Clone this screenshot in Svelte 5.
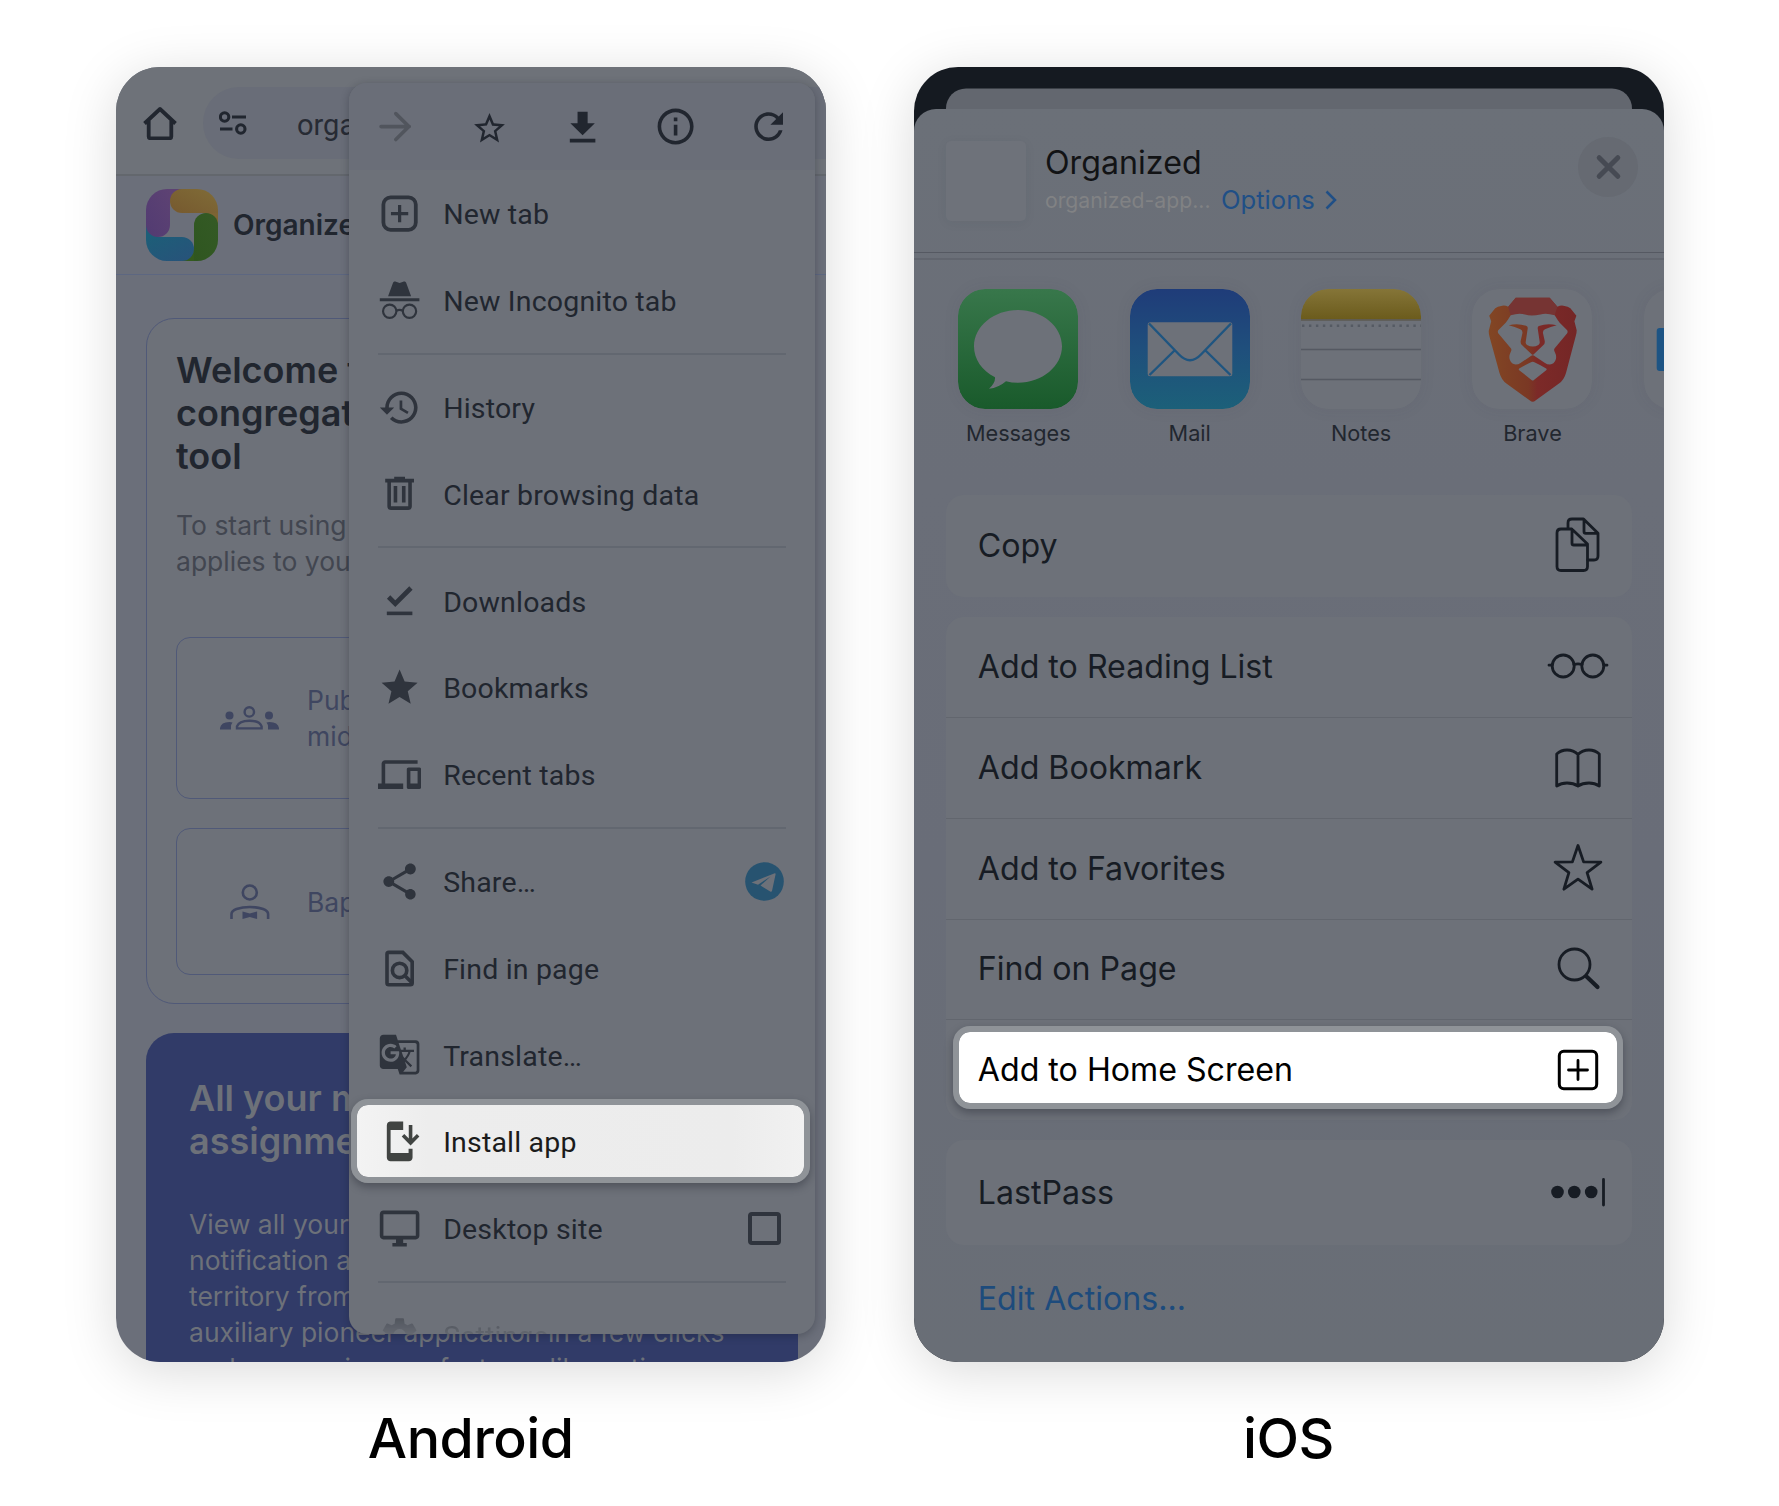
<script>
  const groups = [
    [
      { icon: 'newtab', label: 'New tab' },
      { icon: 'incognito', label: 'New Incognito tab' }
    ],
    [
      { icon: 'history', label: 'History' },
      { icon: 'trash', label: 'Clear browsing data' }
    ],
    [
      { icon: 'done', label: 'Downloads' },
      { icon: 'star', label: 'Bookmarks' },
      { icon: 'devices', label: 'Recent tabs' }
    ],
    [
      { icon: 'share', label: 'Share…', end: 'telegram' },
      { icon: 'find', label: 'Find in page' },
      { icon: 'translate', label: 'Translate…' },
      { icon: 'install', label: 'Install app', active: true },
      { icon: 'desktop', label: 'Desktop site', end: 'checkbox' }
    ],
    [{ icon: 'gear', label: 'Settings', faded: true }]
  ];

  const actions = [
    { icon: 'glasses', label: 'Add to Reading List' },
    { icon: 'book', label: 'Add Bookmark' },
    { icon: 'favorite', label: 'Add to Favorites' },
    { icon: 'search', label: 'Find on Page' },
    { icon: 'plus', label: 'Add to Home Screen', active: true }
  ];
</script>

{#snippet menuIcon(name)}
  <svg class="mi" viewBox="0 0 24 24">
    {#if name === 'newtab'}
      <rect x="3" y="3" width="18" height="18" rx="4" fill="none" stroke="currentColor" stroke-width="2.1" />
      <path d="M12 7.2v9.6M7.2 12h9.6" fill="none" stroke="currentColor" stroke-width="1.8" />
    {:else if name === 'incognito'}
      <path d="M5.6 10.2 8.2 3c.3-.9 1-1.2 1.8-.9l2 .7 2-.7c.8-.3 1.5 0 1.8.9l2.6 7.2zM1 11.3h22v1.6H1z" />
      <g fill="none" stroke="currentColor" stroke-width="1.2">
        <circle cx="6.5" cy="18.5" r="3.7" /><circle cx="17.5" cy="18.5" r="3.7" /><path d="M10.2 18.2q1.8-.9 3.6 0" />
      </g>
    {:else if name === 'history'}
      <path d="M13 3c-4.97 0-9 4.03-9 9H1l3.89 3.89.07.14L9 12H6c0-3.87 3.13-7 7-7s7 3.13 7 7-3.13 7-7 7c-1.93 0-3.68-.79-4.94-2.06l-1.42 1.42C8.27 19.99 10.51 21 13 21c4.97 0 9-4.03 9-9s-4.03-9-9-9zm-1 5v5l4.28 2.54.72-1.21-3.5-2.08V8H12z" />
    {:else if name === 'trash'}
      <path d="M9 2.6h6v1.2h5v2H4v-2h5zM8.7 7.8h2V17h-2zM13.3 7.8h2V17h-2z" />
      <path d="M6.2 5v14.1q0 1 1 1h9.6q1 0 1-1V5" fill="none" stroke="currentColor" stroke-width="2" />
    {:else if name === 'done'}
      <path d="M5.9 10 9.6 13.7 18.3 5" fill="none" stroke="currentColor" stroke-width="2.6" />
      <path d="M4.9 18.1h14.2v2H4.9z" />
    {:else if name === 'star'}
      <path d="M12 17.27 18.18 21l-1.64-7.03L22 9.24l-7.19-.61L12 2 9.19 8.63 2 9.24l5.46 4.73L5.82 21z" />
    {:else if name === 'devices'}
      <path d="M4 6h18V4H4c-1.1 0-2 .9-2 2v11H0v3h14v-3H4V6zm19 2h-6c-.55 0-1 .45-1 1v10c0 .55.45 1 1 1h6c.55 0 1-.45 1-1V9c0-.55-.45-1-1-1zm-1 9h-4v-7h4v7z" />
    {:else if name === 'share'}
      <path d="M18 16.08c-.76 0-1.44.3-1.96.77L8.91 12.7c.05-.23.09-.46.09-.7s-.04-.47-.09-.7l7.05-4.11c.54.5 1.25.81 2.04.81 1.66 0 3-1.34 3-3s-1.34-3-3-3-3 1.34-3 3c0 .24.04.47.09.7L8.04 9.81C7.5 9.31 6.79 9 6 9c-1.66 0-3 1.34-3 3s1.34 3 3 3c.79 0 1.5-.31 2.04-.81l7.12 4.16c-.05.21-.08.43-.08.65 0 1.61 1.31 2.92 2.92 2.92 1.61 0 2.92-1.31 2.92-2.92s-1.31-2.92-2.92-2.92z" />
    {:else if name === 'find'}
      <g fill="none" stroke="currentColor" stroke-width="2">
        <path d="M6 3h7.8L19 8.2V20q0 1-1 1H6q-1 0-1-1V4q0-1 1-1z" />
        <circle cx="12" cy="13" r="4" /><path d="m14.6 15.6 4.4 4.4" />
      </g>
    {:else if name === 'translate'}
      <path d="M21 4H11l-1-3H3c-1.1 0-2 .9-2 2v15c0 1.1.9 2 2 2h8l1 3h9c1.1 0 2-.9 2-2V6c0-1.1-.9-2-2-2zM7 16c-2.76 0-5-2.24-5-5s2.24-5 5-5c1.35 0 2.48.5 3.35 1.3L9.03 8.57c-.38-.36-1.04-.78-2.03-.78-1.74 0-3.15 1.44-3.15 3.21S5.26 14.21 7 14.21c2.01 0 2.84-1.44 2.92-2.41H7v-1.71h4.68c.07.31.12.61.12 1.02C11.8 13.97 9.89 16 7 16zm6.17-5.42h3.7c-.43 1.25-1.11 2.43-2.05 3.47-.31-.35-.6-.72-.86-1.1l-.79-2.37zm8.33 9.92c0 .55-.45 1-1 1H14l2-2.5-1.04-3.1 3.1 3.1.92-.92-3.3-3.25.02-.02c1.13-1.25 1.93-2.69 2.4-4.22H20v-1.3h-4.53V8h-1.29v1.29h-1.44L11.46 5.5h9.04c.55 0 1 .45 1 1v14z" />
    {:else if name === 'install'}
      <path d="M14 .9H7C5.8.9 4.9 1.8 4.9 3v17.8c0 1.2.9 2.1 2.1 2.1h10.1c1.2 0 2.1-.9 2.1-2.1V16H17v2.4H7V5.6h7z" />
      <path d="M18.1 2.8v9.8M13.9 8.5l4.2 4.2 4.2-4.2" fill="none" stroke="currentColor" stroke-width="2" />
    {:else if name === 'desktop'}
      <path d="M21 2H3c-1.1 0-2 .9-2 2v12c0 1.1.9 2 2 2h7v2H8v2h8v-2h-2v-2h7c1.1 0 2-.9 2-2V4c0-1.1-.9-2-2-2zm0 14H3V4h18v12z" />
    {:else if name === 'gear'}
      <path d="M19.14 12.94c.04-.3.06-.61.06-.94 0-.32-.02-.64-.07-.94l2.03-1.58a.49.49 0 0 0 .12-.61l-1.92-3.32a.49.49 0 0 0-.59-.22l-2.39.96c-.5-.38-1.03-.7-1.62-.94l-.36-2.54a.48.48 0 0 0-.48-.41h-3.84c-.24 0-.43.17-.47.41l-.36 2.54c-.59.24-1.13.57-1.62.94l-2.39-.96a.48.48 0 0 0-.59.22L2.74 8.87c-.12.21-.08.47.12.61l2.03 1.58c-.05.3-.09.63-.09.94s.02.64.07.94l-2.03 1.58a.49.49 0 0 0-.12.61l1.92 3.32c.12.22.37.29.59.22l2.39-.96c.5.38 1.03.7 1.62.94l.36 2.54c.05.24.24.41.48.41h3.84c.24 0 .44-.17.47-.41l.36-2.54c.59-.24 1.13-.56 1.62-.94l2.39.96c.22.08.47 0 .59-.22l1.92-3.32a.48.48 0 0 0-.12-.61l-2.01-1.58zM12 15.6A3.61 3.61 0 0 1 8.4 12c0-1.98 1.62-3.6 3.6-3.6s3.6 1.62 3.6 3.6-1.62 3.6-3.6 3.6z" />
    {/if}
  </svg>
{/snippet}

{#snippet actionIcon(name)}
  <svg class="ai" viewBox="0 0 64 64">
    {#if name === 'copy'}
      <path d="M22 15.5V10q0-4 4-4h11.500l14.500 14.300V43q0 4-4 4h-6.300M38 6.500V18.500q0 1.800 1.800 1.800H52" />
      <path d="M15 16h10.800L41.500 31V53.500q0 4-4 4H15q-4 0-4-4V20q0-4 4-4zM26 16.500V30.200q0 1.800 1.800 1.800H41.500" />
    {:else if name === 'glasses'}
      <circle cx="17.200" cy="32" r="11" /><circle cx="46.800" cy="32" r="11" />
      <path d="M28 30.500q4-1.200 8 0M3 31.200h3.200M57.800 31.200H61" />
    {:else if name === 'book'}
      <path d="M32 50V18.500Q27.500 14 21 14q-6 0-10.300 4v32q4.500-3 10.300-3 6.500 0 11 3 4.500-3 11-3 5.800 0 10.300 3V18Q49 14 43 14q-6.500 0-11 4.500" />
    {:else if name === 'favorite'}
      <path d="M32 9.500 37.600 25.900 54.900 26.200 41.100 36.600 46.100 53.200 32 43.200 17.900 53.200 22.900 36.600 9.100 26.200 26.400 25.900z" />
    {:else if name === 'search'}
      <circle cx="28.500" cy="27.500" r="15.500" /><path class="thick" d="M40.500 39.500 51.500 50" />
    {:else if name === 'plus'}
      <rect x="13.300" y="13.300" width="37.400" height="37.400" rx="4.500" class="box" /><path d="M32 22.500v19M22.500 32h19" />
    {:else if name === 'lastpass'}
      <g class="solid"><circle cx="11.500" cy="32" r="6.300" /><circle cx="28.300" cy="32" r="6.300" /><circle cx="45.200" cy="32" r="6.300" /></g>
      <path d="M57.500 19.500v25.500" />
    {/if}
  </svg>
{/snippet}

<main class="board">
  <figure class="shot android-shot">
    <div class="phone android">
      <div class="toolbar">
        <svg class="home" viewBox="0 0 34 34">
          <path d="M1.500 17.500 17 3l15.500 14.500M5.700 14V30.500q0 1.800 1.800 1.800h19q1.800 0 1.800-1.800V14" />
        </svg>
        <div class="url">
          <svg class="tune" viewBox="0 0 28 24">
            <circle cx="5.600" cy="6" r="4.200" /><path d="M13 6h14M1 18h12.500" /><circle cx="21.800" cy="18" r="4.200" />
          </svg>
          <span>organized-app.com</span>
        </div>
      </div>

      <div class="apphead">
        <svg class="logo" viewBox="0 0 72 72">
          <defs>
            <clipPath id="logoClip"><rect width="72" height="72" rx="21" /></clipPath>
            <linearGradient id="lgP" x1="1" y1="0" x2="0" y2="1"><stop offset="0" stop-color="#5d4273" /><stop offset="1" stop-color="#523b72" /></linearGradient>
            <linearGradient id="lgY" x1="0" y1="1" x2="1" y2="0"><stop offset="0" stop-color="#76592f" /><stop offset="1" stop-color="#806c37" /></linearGradient>
            <linearGradient id="lgG" x1="0" y1="1" x2="1" y2="0"><stop offset="0" stop-color="#2f5620" /><stop offset="1" stop-color="#345a25" /></linearGradient>
            <linearGradient id="lgB" x1="0" y1="0" x2="1" y2="1"><stop offset="0" stop-color="#1d5e78" /><stop offset="1" stop-color="#28527a" /></linearGradient>
          </defs>
          <g clip-path="url(#logoClip)">
            <path d="M23 0h13v12H23z" fill="#5d4273" /><path d="M60 23h12v13H60z" fill="#7d6433" />
            <path d="M36 60h13v12H36z" fill="#345a1e" /><path d="M0 36h12v13H0z" fill="#1d5e78" />
            <path d="M36 0h36v24H36a12 12 0 0 1 0-24z" fill="url(#lgY)" />
            <path d="M72 36v36H48V36a12 12 0 0 1 24 0z" fill="url(#lgG)" />
            <path d="M36 72H0V48h36a12 12 0 0 1 0 24z" fill="url(#lgB)" />
            <path d="M0 36V0h24v36a12 12 0 0 1-24 0z" fill="url(#lgP)" />
          </g>
        </svg>
        <strong>Organized</strong>
      </div>

      <div class="page">
        <section class="card">
          <h2>Welcome to the<br />congregation<br />tool</h2>
          <p>To start using the app,<br />applies to you</p>
          <div class="option tall">
            <svg class="people" viewBox="0 0 59 24">
              <g fill="currentColor"><circle cx="9.500" cy="9.500" r="4" /><circle cx="49" cy="9.500" r="4" />
                <path d="M0 23.500V22q1-6 9.500-6 2 0 3 .4-1.500 2-1.500 4v3.100zM59 23.500V22q-1-6-9.500-6-2 0-3 .4 1.500 2 1.500 4v3.100z" /></g>
              <g fill="none" stroke="currentColor" stroke-width="2.400"><circle cx="29.300" cy="5.900" r="4.700" />
                <path d="M17 22.400v-2q2-5.700 12.300-5.700t12.300 5.700v2z" /></g>
            </svg>
            <span>Publisher<br />midweek</span>
          </div>
          <div class="option">
            <svg class="person" viewBox="0 0 40 36">
              <circle cx="19.800" cy="8.500" r="7" /><path d="M1.500 35v-5q0-3 5-5 6-2 13.300-2t13.300 2q5 2 5 5v5" />
              <path class="tie" d="M12.500 27.500l7.300 2 7.300-2v7.500l-7.300-2-7.300 2z" />
            </svg>
            <span>Baptized</span>
          </div>
        </section>
        <section class="promo">
          <h2>All your ministry<br />assignments</h2>
          <p>View all your meetings,<br />notification and<br />territory from anywhere<br />auxiliary pioneer application in a few clicks<br />and more using our features like notices</p>
        </section>
      </div>

      <div class="menu">
        <div class="quick">
          <svg class="mi pale" viewBox="0 0 24 24"><path d="M2.800 12h15.700M11 4.800l7.300 7.200-7.300 7.200" fill="none" stroke="currentColor" stroke-width="2" stroke-linecap="round" stroke-linejoin="round" /></svg>
          <svg class="mi small" viewBox="0 0 24 24"><path d="M22 9.240l-7.190-.62L12 2 9.190 8.630 2 9.240l5.460 4.730L5.820 21 12 17.270 18.180 21l-1.630-7.030L22 9.240zM12 15.400l-3.760 2.270 1-4.280-3.320-2.880 4.380-.38L12 6.100l1.710 4.040 4.380.38-3.320 2.880 1 4.280L12 15.400z" /></svg>
          <svg class="mi" viewBox="0 0 24 24"><path d="M9.200 3.800h5.600v6.400h4L12 16.800l-6.800-6.600H9.200zM4.900 18.800h14.200v2.100H4.900z" /></svg>
          <svg class="mi" viewBox="0 0 24 24"><path d="M11 7h2v2h-2zm0 4h2v6h-2zm1-9C6.480 2 2 6.480 2 12s4.480 10 10 10 10-4.480 10-10S17.520 2 12 2zm0 18c-4.410 0-8-3.590-8-8s3.590-8 8-8 8 3.590 8 8-3.590 8-8 8z" /></svg>
          <svg class="mi" viewBox="0 0 24 24"><path d="M17.650 6.350C16.200 4.900 14.210 4 12 4c-4.420 0-7.990 3.580-7.990 8s3.570 8 7.990 8c3.730 0 6.840-2.550 7.730-6h-2.080c-.82 2.330-3.040 4-5.650 4-3.310 0-6-2.690-6-6s2.690-6 6-6c1.660 0 3.140.69 4.220 1.780L13 11h7V4l-2.350 2.350z" /></svg>
        </div>
        {#each groups as group}
          <ul>
            {#each group as item}
              <li class:active={item.active} class:faded={item.faded}>
                {@render menuIcon(item.icon)}
                <span class="label">{item.label}</span>
                {#if item.end === 'telegram'}
                  <svg class="telegram" viewBox="0 0 39 39"><circle cx="19.500" cy="19.500" r="19.300" /><path d="M6.500 20.500 29.800 11.300q1-.2.800 1L27 29q-.6 1.300-1.800.5L15.500 23.500 25.500 14.500 13 22.700z" /></svg>
                {:else if item.end === 'checkbox'}
                  <span class="checkbox"></span>
                {/if}
              </li>
            {/each}
          </ul>
        {/each}
      </div>
    </div>
    <figcaption>Android</figcaption>
  </figure>

  <figure class="shot ios-shot">
    <div class="phone ios">
      <div class="backcard"></div>
      <div class="sheet">
        <header>
          <div class="thumb"></div>
          <div class="who">
            <div class="title">Organized</div>
            <div class="sub">
              <span class="domain">organized-app...</span>
              <span class="options">Options</span>
              <svg class="chev" viewBox="0 0 12 20"><path d="M1.500 1.500 10 10l-8.500 8.500" /></svg>
            </div>
          </div>
          <svg class="close" viewBox="0 0 60 60"><circle cx="30" cy="30" r="30" /><path d="M21.200 20.700l18.600 18.600M39.800 20.700 21.200 39.300" /></svg>
        </header>

        <div class="apps">
          <div class="app">
            <svg viewBox="0 0 120 120">
              <defs><linearGradient id="gMsg" x1="0" y1="0" x2="0" y2="1"><stop offset="0" stop-color="#38774b" /><stop offset="1" stop-color="#195a2b" /></linearGradient></defs>
              <rect width="120" height="120" rx="27" fill="url(#gMsg)" />
              <path fill="#6d7179" d="M60 21c24.300 0 44 16.300 44 36.300S84.300 93.700 60 93.700q-6.500 0-12-1.500-7.500 6.500-17 7.500 6.500-5.500 6-11.500C23.500 81.500 16 70 16 57.300 16 37.300 35.700 21 60 21z" />
            </svg>
            <span>Messages</span>
          </div>
          <div class="app">
            <svg viewBox="0 0 120 120">
              <defs><linearGradient id="gMail" x1="0" y1="0" x2="0" y2="1"><stop offset="0" stop-color="#1f3c79" /><stop offset=".5" stop-color="#1f4f7c" /><stop offset="1" stop-color="#1c6079" /></linearGradient></defs>
              <rect width="120" height="120" rx="27" fill="url(#gMail)" />
              <rect x="17.700" y="33.300" width="84.600" height="54" rx="2.500" fill="#6d7179" />
              <path d="M19 34.500 49 65.500Q60 77 71 65.500L101 34.500M19.500 86 45 61M100.500 86 75 61" fill="none" stroke="#1f5580" stroke-width="2.400" />
            </svg>
            <span>Mail</span>
          </div>
          <div class="app">
            <svg viewBox="0 0 120 120">
              <defs><clipPath id="cNotes"><rect width="120" height="120" rx="27" /></clipPath>
                <linearGradient id="gNotes" x1="0" y1="0" x2="0" y2="1"><stop offset="0" stop-color="#857538" /><stop offset="1" stop-color="#6b5b1c" /></linearGradient></defs>
              <g clip-path="url(#cNotes)">
                <rect width="120" height="120" fill="#6d7179" /><rect width="120" height="30.500" fill="url(#gNotes)" />
                <path d="M0 31h120" stroke="#5c5a52" stroke-width="1.500" />
                <path d="M1 36.700h120" stroke="#555a63" stroke-width="2.400" stroke-dasharray="2.400 4.560" />
                <path d="M0 60.500h120M0 90.500h120" stroke="#555962" stroke-width="1.500" />
              </g>
            </svg>
            <span>Notes</span>
          </div>
          <div class="app">
            <svg viewBox="0 0 120 120">
              <defs>
                <linearGradient id="gBrave" gradientUnits="userSpaceOnUse" x1="17" y1="0" x2="105" y2="0"><stop offset="0" stop-color="#824624" /><stop offset=".45" stop-color="#7a3824" /><stop offset=".55" stop-color="#7c2a28" /><stop offset="1" stop-color="#742626" /></linearGradient>
              </defs>
              <rect width="120" height="120" rx="27" fill="#6d7179" />
              <path fill="url(#gBrave)" d="M43.700 8.700h34l7.700 9q3-1.500 6-1 5 .6 7 2.600l6 7.400-2 5.600 2.300 9q0 3-1 6L94 84q-2 7-7 10.500L63.500 111.500q-2.800 2.500-5.600 0L34.400 94.500Q29.500 91 27.500 84L17.600 48q-.9-3-.9-6l2.500-9.700-2-5.600 6-7.400q2-2 7-2.600 3-.5 6 1z" />
              <path fill="#763433" d="M43.700 8.700h34l7.700 9-2.700 8.600Q74 24.500 60.700 27 47 24.500 38.700 26.300L36.200 17.700z" />
              <path fill="#6d7179" d="M38.700 26.300Q47 23.500 53 25.500t15.400 0Q74 23.500 82.700 26.300q3 5 5 7.500l7.500 7.500q.8 1.500 0 3L82.500 59.500q-1 1.500.5 4 2 4 .6 7.500-1.600 4-5.600 4.500-3 0-5-1.500L61.700 66.500q-1-.7-2 0L48.500 74q-2 1.500-5 1.500-4-.5-5.600-4.500-1.400-3.500.6-7.500 1.500-2.500.5-4L26.200 44.300q-.8-1.500 0-3l7.500-7.500q2-2.500 5-7.500z" />
              <path fill="url(#gBrave)" d="M36.700 36.300Q46 34 54.500 37q1.500.6 1.200 2.500L53.700 53q-.3 2 1.300 3 6 3 11.400 0 1.600-1 1.300-3l-2-13.500q-.3-1.900 1.200-2.500 8.500-3 17.800-.7-6 1.500-11.700 4-2.500 1.200-2 4l1.700 7.500q.5 3-1.500 4.500L61.500 65.500q-.8.600-1.600 0L50.200 56.300q-2-1.500-1.500-4.500l1.700-7.500q.5-2.800-2-4-5.700-2.500-11.700-4z" />
              <path fill="#6d7179" d="M47.200 79.500Q54 75.500 59.500 73q1.200-.5 2.400 0 5.500 2.500 12.300 6.500 1 .8 0 1.700L61.900 91q-1.200 1-2.400 0L47.200 81.200q-1-.9 0-1.700z" />
            </svg>
            <span>Brave</span>
          </div>
          <div class="app">
            <svg viewBox="0 0 120 120"><rect width="120" height="120" rx="27" fill="#6d7179" /><rect x="12.700" y="39" width="90" height="43" rx="3" fill="#1d5484" /></svg>
          </div>
        </div>

        <div class="list">
          <div class="row"><span>Copy</span>{@render actionIcon('copy')}</div>
        </div>
        <div class="list many">
          {#each actions as action}
            <div class="row" class:active={action.active}><span>{action.label}</span>{@render actionIcon(action.icon)}</div>
          {/each}
        </div>
        <div class="list last">
          <div class="row"><span>LastPass</span>{@render actionIcon('lastpass')}</div>
        </div>
        <div class="edit">Edit Actions...</div>
      </div>
    </div>
    <figcaption>iOS</figcaption>
  </figure>
</main>

<style>
  :global(body) { background: #fff; }
  .board {
    box-sizing: border-box;
    width: 1779px;
    height: 1506px;
    padding: 67px 115px 0 116px;
    display: flex;
    gap: 88px;
    overflow: hidden;
    font-family: Inter, "Liberation Sans", sans-serif;
  }
  .shot { margin: 0; }
  .android-shot { width: 709.500px; }
  .ios-shot { width: 750px; }
  .phone {
    position: relative;
    height: 1295px;
    border-radius: 44px;
    overflow: hidden;
    box-shadow: 0 9px 54px rgba(0, 0, 0, .15);
  }
  figcaption {
    margin-top: 41px;
    text-align: center;
    font-size: 55.500px;
    line-height: 70px;
    font-weight: 500;
    letter-spacing: -.5px;
    color: #000;
  }

  /* Android browser */
  .android { background: #6b6f7a; }
  .toolbar {
    box-sizing: border-box;
    height: 109px;
    padding-left: 28px;
    display: flex;
    align-items: center;
    background: #6e7279;
    border-bottom: 2px solid #63676d;
  }
  .home {
    width: 34px;
    height: 34px;
    margin: 4px 26px 0 -1px;
    fill: none;
    stroke: #21262f;
    stroke-width: 3.8;
    stroke-linejoin: round;
  }
  .url {
    flex: 1;
    height: 72px;
    margin-top: 5px;
    padding-left: 16px;
    border-radius: 36px 0 0 36px;
    background: #696d78;
    display: flex;
    align-items: center;
    gap: 50px;
    overflow: hidden;
    font: 29px Roboto, sans-serif;
    color: #272b34;
  }
  .url span { padding-top: 4px; }
  .tune { width: 28px; height: 24px; flex: none; fill: none; stroke: #21262f; stroke-width: 3.1; }
  .apphead {
    box-sizing: border-box;
    height: 99px;
    padding: 0 0 1px 30px;
    display: flex;
    align-items: center;
    gap: 15px;
    border-bottom: 1px solid #5d6781;
  }
  .logo { width: 72px; height: 72px; }
  .apphead strong { padding-top: 1px; font-size: 28px; font-weight: 600; color: #21262f; }
  .page { padding: 43px 28px 0 30px; }
  .card {
    box-sizing: border-box;
    height: 686px;
    padding: 29.500px 29px 0;
    border: 1px solid #505978;
    border-radius: 28px;
    background: #6d7179;
  }
  h2 {
    margin: 0;
    font-size: 36px;
    line-height: 43.4px;
    font-weight: 600;
    color: #21262f;
    white-space: nowrap;
  }
  p {
    margin: 28.500px 0 0;
    font-size: 26.500px;
    line-height: 36.2px;
    color: #424650;
    white-space: nowrap;
  }
  .option {
    box-sizing: border-box;
    height: 147px;
    padding: 1px 0 0 53px;
    display: flex;
    align-items: center;
    gap: 37px;
    border: 1px solid #505978;
    border-radius: 14px;
    font-size: 26.500px;
    line-height: 36.2px;
    color: #3f4660;
  }
  .option.tall { height: 162px; margin: 57px 0 29px; padding: 1px 0 0 43px; gap: 28px; }
  .people { width: 59px; height: 24px; color: #3f4661; }
  .person { width: 40px; height: 36px; fill: none; stroke: #3f4661; stroke-width: 2.6; }
  .person .tie { fill: #3f4661; stroke: none; }
  .promo {
    height: 420px;
    margin-top: 29px;
    padding: 44px 43px 0;
    border-radius: 28px 28px 0 0;
    background: #313b68;
  }
  .promo h2, .promo p { color: #6d7179; }
  .promo p { margin-top: 42px; line-height: 36px; }

  /* Overflow menu */
  .menu {
    position: absolute;
    left: 233px;
    top: 15.500px;
    width: 466px;
    height: 1251px;
    border-radius: 18px;
    overflow: hidden;
    background: #6d7179;
    box-shadow: 0 2px 8px rgba(20, 24, 34, .3);
  }
  .quick {
    box-sizing: border-box;
    height: 87.500px;
    padding: 1px 25px 0 27px;
    display: flex;
    justify-content: space-between;
    align-items: center;
    background: #6a6e78;
    color: #21262f;
  }
  .mi { width: 43.2px; height: 43.2px; flex: none; fill: currentColor; }
  .mi.pale { color: #51555d; }
  .mi.small { width: 37px; height: 37px; margin: 3px 4px 0 2px; }
  ul { margin: 0; padding: 0; list-style: none; }
  ul + ul::before {
    content: "";
    display: block;
    height: 2px;
    margin: 9.300px 29px;
    background: #626770;
  }
  li {
    position: relative;
    height: 86.650px;
    padding: 0 29px;
    display: flex;
    align-items: center;
    gap: 22px;
    color: #2f343d;
  }
  .label {
    position: relative;
    flex: 1;
    padding-top: 2.500px;
    font: 28.500px Roboto, sans-serif;
    letter-spacing: .18px;
    color: #21262f;
  }
  .telegram { width: 39px; height: 39px; margin-right: 2px; fill: #275370; }
  .telegram path { fill: #6d7179; }
  .checkbox {
    box-sizing: border-box;
    width: 33px;
    height: 33px;
    margin-right: 5px;
    border: 4px solid #2f343d;
    border-radius: 4px;
  }
  .active::before {
    content: "";
    position: absolute;
    border-radius: 17px;
    border: 6px solid #8f9398;
    background: #fff padding-box;
    box-shadow: 0 4px 8px rgba(20, 24, 34, .35);
  }
  li.active { color: #414442; }
  li.active .mi { position: relative; }
  li.active::before {
    inset: 1px 5px 1.500px 2px;
    background: linear-gradient(90deg, #f3f3f3, #ededed 16%, #ececec 84%, #f1f1f1) padding-box;
    box-shadow: 0 4px 8px rgba(20, 24, 34, .35);
  }
  li.active .label { color: #1b1b1b; }
  li.faded { -webkit-mask-image: linear-gradient(#0008 25%, #0001 52%); mask-image: linear-gradient(#0008 25%, #0001 52%); }

  /* iOS share sheet */
  .ios { background: #151a21; }
  .backcard { height: 42px; margin: 0 32px; padding-top: 0; }
  .backcard::before {
    content: "";
    display: block;
    height: 42px;
    border-radius: 20px 20px 0 0;
    background: #63676f;
    transform: translateY(21.500px);
  }
  .sheet {
    position: relative;
    box-sizing: border-box;
    height: 1253px;
    border-radius: 22px 22px 0 0;
    background: linear-gradient(#6b7078, #6a6e78 30%, #696d78 60%, #696e76);
  }
  header {
    box-sizing: border-box;
    height: 151px;
    padding: 32px 26px 0 32px;
    display: flex;
    border-bottom: 2px solid #61656e;
    background: linear-gradient(#0000 143px, #555962 143px, #555962 144.500px, #0000 144.500px);
    background-origin: border-box;
    background-clip: border-box;
    background-position: 0 0;
  }
  .thumb { width: 80px; height: 80px; border-radius: 5px; background: #6e727a; box-shadow: 0 2px 12px rgba(40, 44, 54, .06); }
  .who { flex: 1; margin-left: 19.500px; }
  .title { font-size: 32.200px; line-height: 40px; margin-top: 2px; color: #121315; }
  .sub { display: flex; align-items: center; line-height: 30px; margin-top: 1.500px; }
  .domain { width: 176px; font-size: 21.200px; color: #818284; }
  .options { font-size: 25.600px; color: #204f86; }
  .chev { width: 12px; height: 20px; margin-left: 10px; fill: none; stroke: #204f86; stroke-width: 2.500; }
  .close { width: 60px; height: 60px; margin-top: -4px; fill: #666a72; stroke-linecap: round; }
  .close path { stroke: #464a53; stroke-width: 5; }
  .apps { display: flex; gap: 51.400px; height: 235px; padding: 29px 0 0 44.800px; box-sizing: border-box; overflow: hidden; }
  .app { width: 120px; flex: none; text-align: center; }
  .app svg { display: block; width: 120px; height: 120px; border-radius: 27px; box-shadow: 0 0 16px rgba(60, 60, 80, .08); }
  .app span { display: block; margin: 10px -10px 0; font-size: 21.700px; line-height: 28px; color: #22272f; }
  .list {
    margin: 0 32px 20px;
    border-radius: 18px;
    background: #6d7179;
  }
  .row {
    position: relative;
    box-sizing: border-box;
    height: 100.700px;
    padding: 0 21.500px 1px 32.300px;
    display: flex;
    align-items: center;
    justify-content: space-between;
    font-size: 32.150px;
    color: #171c24;
  }
  .list:not(.many) .row { height: 101.500px; }
  .row + .row { border-top: 1.500px solid #62666e; }
  .list.last .row { height: 105.500px; padding-bottom: 1px; }
  .row span, .row .ai { position: relative; }
  .ai {
    width: 64px;
    height: 64px;
    fill: none;
    stroke: currentColor;
    stroke-width: 2.800;
    stroke-linejoin: round;
    stroke-linecap: round;
  }
  .ai .thick { stroke-width: 4.200; }
  .ai .box { stroke-width: 3; }
  .ai .solid { fill: currentColor; stroke: none; }
  .row.active { color: #000; }
  .row.active::before { inset: 5.500px 9px 11px 7.500px; }
  .edit { margin: 33.500px 0 0 64.300px; font-size: 32.150px; line-height: 40px; color: #1d4b7c; }
</style>
